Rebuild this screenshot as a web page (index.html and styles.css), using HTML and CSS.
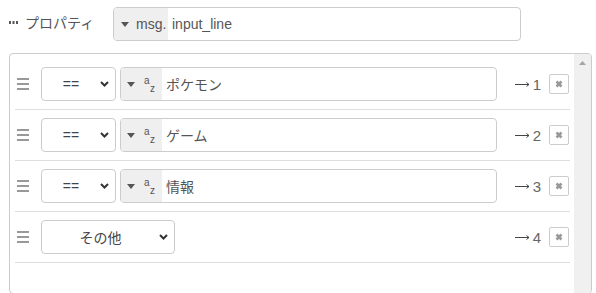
FILE: index.html
```html
<!DOCTYPE html>
<html lang="ja">
<head>
  <meta charset="UTF-8" />
  <title>Switch - プロパティ</title>
  <link rel="stylesheet" href="styles.css">
</head>
<body>

  <div class="form-row">
    <label class="prop-label">
      <svg class="dots" width="9" height="3" viewBox="0 0 9 3"><rect x="0" y="0" width="2" height="3"/><rect x="3.5" y="0" width="2" height="3"/><rect x="7" y="0" width="2" height="3"/></svg>
      プロパティ
    </label>
    <div class="typed top-input">
      <div class="typed-btn">
        <svg class="caret" width="8" height="5" viewBox="0 0 8 5"><path d="M0 0h8L4 5z"/></svg>
        <span class="type-label">msg.</span>
      </div>
      <span class="typed-value">input_line</span>
    </div>
  </div>

  <div class="rule-box">
    <ol class="rule-list">
      <li class="rule">
        <span class="handle"></span>
        <div class="select op"><span class="select-text">==</span><svg class="chev" width="9" height="6" viewBox="0 0 9 6"><path d="M1 1l3.5 3.5L8 1"/></svg></div>
        <div class="typed rule-input">
          <div class="typed-btn short">
            <svg class="caret" width="8" height="5" viewBox="0 0 8 5"><path d="M0 0h8L4 5z"/></svg>
            <span class="az"><i>a</i><i>z</i></span>
          </div>
          <span class="typed-value">ポケモン</span>
        </div>
        <span class="output"><svg class="arrow" width="15" height="7" viewBox="0 0 15 7"><path d="M0 3.5h14M11.5 1.5l2.5 2-2.5 2"/></svg>1</span>
        <button class="del"><svg width="8" height="8" viewBox="0 0 8 8"><path d="M1.5 1.5l5 5M6.5 1.5l-5 5"/></svg></button>
      </li>
      <li class="rule">
        <span class="handle"></span>
        <div class="select op"><span class="select-text">==</span><svg class="chev" width="9" height="6" viewBox="0 0 9 6"><path d="M1 1l3.5 3.5L8 1"/></svg></div>
        <div class="typed rule-input">
          <div class="typed-btn short">
            <svg class="caret" width="8" height="5" viewBox="0 0 8 5"><path d="M0 0h8L4 5z"/></svg>
            <span class="az"><i>a</i><i>z</i></span>
          </div>
          <span class="typed-value">ゲーム</span>
        </div>
        <span class="output"><svg class="arrow" width="15" height="7" viewBox="0 0 15 7"><path d="M0 3.5h14M11.5 1.5l2.5 2-2.5 2"/></svg>2</span>
        <button class="del"><svg width="8" height="8" viewBox="0 0 8 8"><path d="M1.5 1.5l5 5M6.5 1.5l-5 5"/></svg></button>
      </li>
      <li class="rule">
        <span class="handle"></span>
        <div class="select op"><span class="select-text">==</span><svg class="chev" width="9" height="6" viewBox="0 0 9 6"><path d="M1 1l3.5 3.5L8 1"/></svg></div>
        <div class="typed rule-input">
          <div class="typed-btn short">
            <svg class="caret" width="8" height="5" viewBox="0 0 8 5"><path d="M0 0h8L4 5z"/></svg>
            <span class="az"><i>a</i><i>z</i></span>
          </div>
          <span class="typed-value">情報</span>
        </div>
        <span class="output"><svg class="arrow" width="15" height="7" viewBox="0 0 15 7"><path d="M0 3.5h14M11.5 1.5l2.5 2-2.5 2"/></svg>3</span>
        <button class="del"><svg width="8" height="8" viewBox="0 0 8 8"><path d="M1.5 1.5l5 5M6.5 1.5l-5 5"/></svg></button>
      </li>
      <li class="rule">
        <span class="handle"></span>
        <div class="select other"><span class="select-text">その他</span><svg class="chev" width="9" height="6" viewBox="0 0 9 6"><path d="M1 1l3.5 3.5L8 1"/></svg></div>
        <span class="output"><svg class="arrow" width="15" height="7" viewBox="0 0 15 7"><path d="M0 3.5h14M11.5 1.5l2.5 2-2.5 2"/></svg>4</span>
        <button class="del"><svg width="8" height="8" viewBox="0 0 8 8"><path d="M1.5 1.5l5 5M6.5 1.5l-5 5"/></svg></button>
      </li>
    </ol>
    <div class="scrollbar">
      <svg width="7" height="4" viewBox="0 0 7 4"><path d="M0 4h7L3.5 0z"/></svg>
    </div>
  </div>

</body>
</html>
```

FILE: styles.css
```css
body {
  margin: 0;
  padding-left: 9px;
  font-family: 'Liberation Sans', 'Noto Sans CJK JP', sans-serif;
  font-size: 14px;
  color: #555;
  background: #fff;
}

.form-row {
  display: flex;
  align-items: center;
  margin-top: 7px;
}

.prop-label {
  width: 104px;
  display: flex;
  align-items: center;
  gap: 7px;
  color: #555;
  margin-top: -4px;
}

.dots {
  fill: #555;
}

.typed {
  display: flex;
  align-items: center;
  height: 34px;
  box-sizing: border-box;
  border: 1px solid #ccc;
  border-radius: 4px;
  overflow: hidden;
  background: #fff;
}

.top-input {
  width: 408px;
}

.typed-btn {
  display: flex;
  align-items: center;
  height: 100%;
  width: 54px;
  box-sizing: border-box;
  padding-left: 7px;
  background: #efefef;
  color: #555;
}

.typed-btn.short {
  width: 41px;
  padding-left: 6px;
}

.caret {
  fill: #555;
}

.type-label {
  margin-left: 7px;
}

.typed-value {
  padding-left: 4px;
  color: #555;
}

.az {
  position: relative;
  width: 10px;
  height: 16px;
  margin-left: 9px;
  font-size: 10px;
  color: #555;
}

.az i {
  position: absolute;
  font-style: normal;
  line-height: 10px;
}

.az i:first-child {
  left: 0;
  top: 0;
}

.az i:last-child {
  left: 6px;
  top: 8px;
}

.rule-box {
  display: flex;
  margin-top: 12px;
  width: 583px;
  height: 241px;
  box-sizing: border-box;
  border: 1px solid #ccc;
  border-radius: 4px;
  overflow: hidden;
}

.rule-list {
  flex: 1;
  list-style: none;
  margin: 0;
  padding: 5px 4px 0 5px;
}

.rule {
  display: flex;
  align-items: center;
  padding: 8px 0;
  border-bottom: 1px solid #ddd;
}

.handle {
  width: 12px;
  height: 8px;
  margin: 0 12px 0 2px;
  border-top: 2px solid #999;
  border-bottom: 2px solid #999;
  position: relative;
}

.handle::after {
  content: "";
  position: absolute;
  left: 0;
  right: 0;
  top: 3px;
  height: 2px;
  background: #999;
}

.select {
  display: flex;
  align-items: center;
  height: 34px;
  box-sizing: border-box;
  border: 1px solid #ccc;
  border-radius: 4px;
  padding-right: 6px;
  background: #fff;
  color: #444;
}

.select.op {
  width: 75px;
}

.select.other {
  width: 134px;
}

.select-text {
  flex: 1;
  text-align: center;
}

.chev {
  fill: none;
  stroke: #333;
  stroke-width: 2;
}

.rule-input {
  width: 377px;
  margin-left: 4px;
}

.output {
  margin-left: auto;
  display: flex;
  align-items: center;
  gap: 3px;
  color: #666;
  font-size: 15px;
}

.arrow {
  fill: none;
  stroke: #444;
  stroke-width: 1;
}

.del {
  width: 20px;
  height: 20px;
  margin: 0 1px 0 8px;
  padding: 0;
  border: 1px solid #ccc;
  border-radius: 2px;
  background: #fff;
  display: flex;
  align-items: center;
  justify-content: center;
}

.del svg {
  stroke: #999;
  stroke-width: 2.6;
}

.scrollbar {
  width: 17px;
  background: #f0f0f0;
  display: flex;
  justify-content: center;
  padding-top: 7px;
  align-items: flex-start;
  fill: #a3a3a3;
}
```
